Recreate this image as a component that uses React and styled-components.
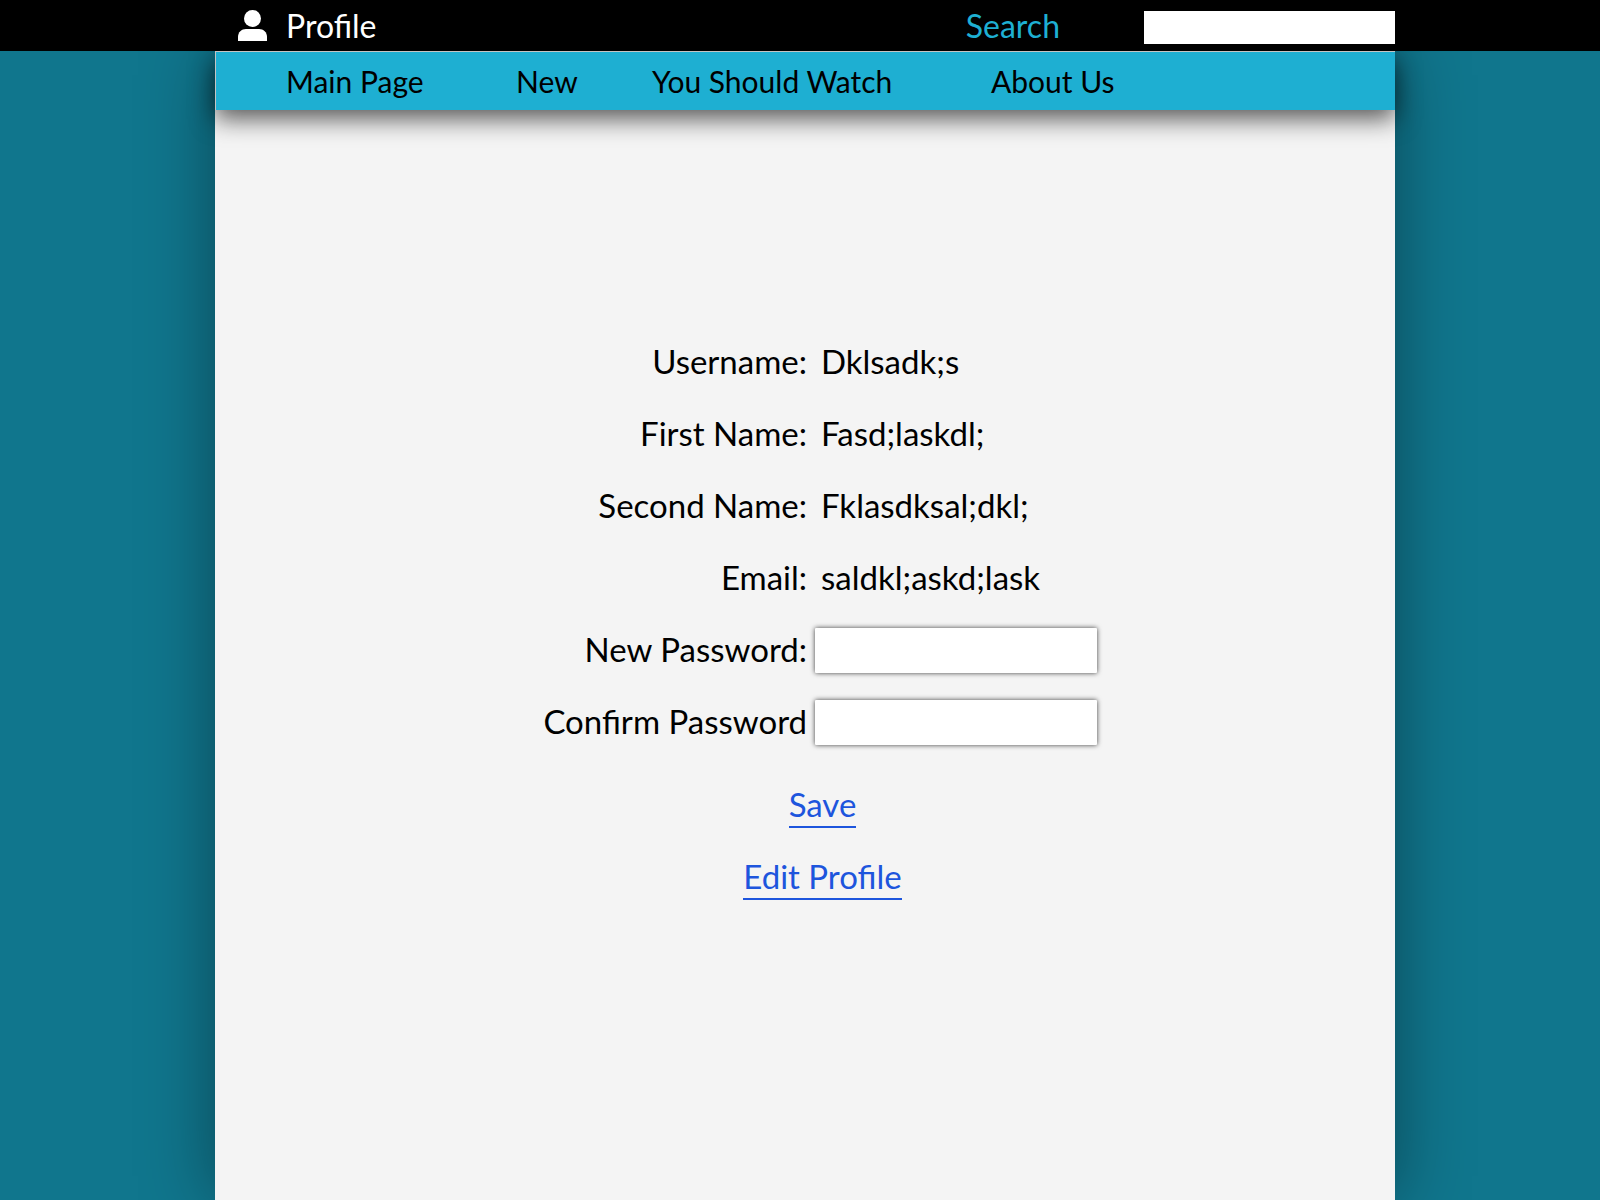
import React from "react";
import styled, { createGlobalStyle } from "styled-components";

const GlobalStyle = createGlobalStyle`
  *, *::before, *::after { box-sizing: border-box; }
  body {
    margin: 0;
    background: #10768d;
    color: #000;
    font-family: Lato, "Noto Sans", sans-serif;
    font-size: 32px;
    line-height: 40px;
  }
  input { font: inherit; }
`;

const Page = styled.div`
  min-height: 100vh;
  display: flex;
  flex-direction: column;
  overflow: hidden;
`;

const Columns = styled.div`
  display: grid;
  grid-template-columns: 43fr 236fr 41fr;
  & > * { grid-column: 2; min-width: 0; }
`;

const TopBar = styled(Columns).attrs({ as: "header" })`
  position: relative;
  z-index: 1;
  background: #000;
`;

const TopBarContent = styled.div`
  display: flex;
  align-items: center;
  justify-content: space-between;
  height: 51px;
  padding-left: 23px;
`;

const ProfileLink = styled.a`
  display: flex;
  align-items: center;
  gap: 19px;
  color: #fff;
  text-decoration: none;
`;

const SearchForm = styled.form`
  display: flex;
  align-items: center;
  gap: 84px;
`;

const SearchLabel = styled.label`
  color: #1eafd2;
`;

const SearchInput = styled.input`
  width: 251px;
  height: 33px;
  margin-top: 4px;
  padding: 0 8px;
  border: 0;
  border-radius: 0;
  background: #fff;
  font-size: 20px;
`;

const Body = styled(Columns)`
  flex: 1;
`;

const Panel = styled.div`
  background: #f4f4f4;
  box-shadow: 0 0 68px rgba(0, 0, 0, 0.4);
`;

const Nav = styled.nav`
  display: grid;
  grid-template-columns: 230fr 136fr 339fr 404fr;
  align-items: center;
  height: 59px;
  padding-left: 70px;
  border-top: 1px solid #c4c4c4;
  border-left: 1px solid #c4c4c4;
  background: #1eafd2;
  box-shadow: 0 9px 24px rgba(0, 0, 0, 0.64);
`;

const NavLink = styled.a`
  color: #000;
  font-size: 30px;
  white-space: nowrap;
  text-decoration: none;
`;

const Main = styled.main`
  padding: 216px 0 48px;
  font-size: 33px;
`;

const Row = styled.div`
  display: grid;
  grid-template-columns: 592fr 580fr;
  column-gap: 8px;
  align-items: center;
  min-height: 72px;
`;

const FieldName = styled.label`
  padding-bottom: 2px;
  text-align: right;
`;

const FieldValue = styled.output`
  padding: 0 0 2px 6px;
`;

const PasswordInput = styled.input`
  width: 282px;
  height: 45px;
  padding: 0 12px;
  border: 0;
  border-radius: 1px;
  background: #fff;
  box-shadow: 0 0 5px rgba(0, 0, 0, 0.75);
`;

const Actions = styled.div`
  display: flex;
  flex-direction: column;
  align-items: center;
  gap: 29px;
  padding: 27px 0 0 35px;
`;

const ActionLink = styled.a`
  height: 43px;
  border-bottom: 2px solid #1d55dd;
  color: #1d55dd;
  line-height: 38px;
  text-decoration: none;
`;

const details = [
  { id: "username", name: "Username:", value: "Dklsadk;s" },
  { id: "first-name", name: "First Name:", value: "Fasd;laskdl;" },
  { id: "second-name", name: "Second Name:", value: "Fklasdksal;dkl;" },
  { id: "email", name: "Email:", value: "saldkl;askd;lask" },
];

const passwords = [
  { id: "new-password", name: "New Password:" },
  { id: "confirm-password", name: "Confirm Password" },
];

const navItems = ["Main Page", "New", "You Should Watch", "About Us"];

function PersonIcon() {
  return (
    <svg width="29" height="31" viewBox="0 0 29 31" fill="#fff" aria-hidden="true">
      <circle cx="14.5" cy="8.5" r="8.5" />
      <path d="M0 31V27C0 22 3.500 19 8 19H21C25.500 19 29 22 29 27V31Z" />
    </svg>
  );
}

export default function App() {
  return (
    <Page>
      <GlobalStyle />
      <TopBar>
        <TopBarContent>
          <ProfileLink href="#profile">
            <PersonIcon />
            Profile
          </ProfileLink>
          <SearchForm role="search">
            <SearchLabel htmlFor="search">Search</SearchLabel>
            <SearchInput id="search" type="text" />
          </SearchForm>
        </TopBarContent>
      </TopBar>
      <Body>
        <Panel>
          <Nav>
            {navItems.map((item) => (
              <NavLink key={item} href="#">{item}</NavLink>
            ))}
          </Nav>
          <Main>
            {details.map(({ id, name, value }) => (
              <Row key={id}>
                <FieldName htmlFor={id}>{name}</FieldName>
                <FieldValue id={id}>{value}</FieldValue>
              </Row>
            ))}
            {passwords.map(({ id, name }) => (
              <Row key={id}>
                <FieldName htmlFor={id}>{name}</FieldName>
                <PasswordInput id={id} type="password" />
              </Row>
            ))}
            <Actions>
              <ActionLink href="#save">Save</ActionLink>
              <ActionLink href="#edit">Edit Profile</ActionLink>
            </Actions>
          </Main>
        </Panel>
      </Body>
    </Page>
  );
}
